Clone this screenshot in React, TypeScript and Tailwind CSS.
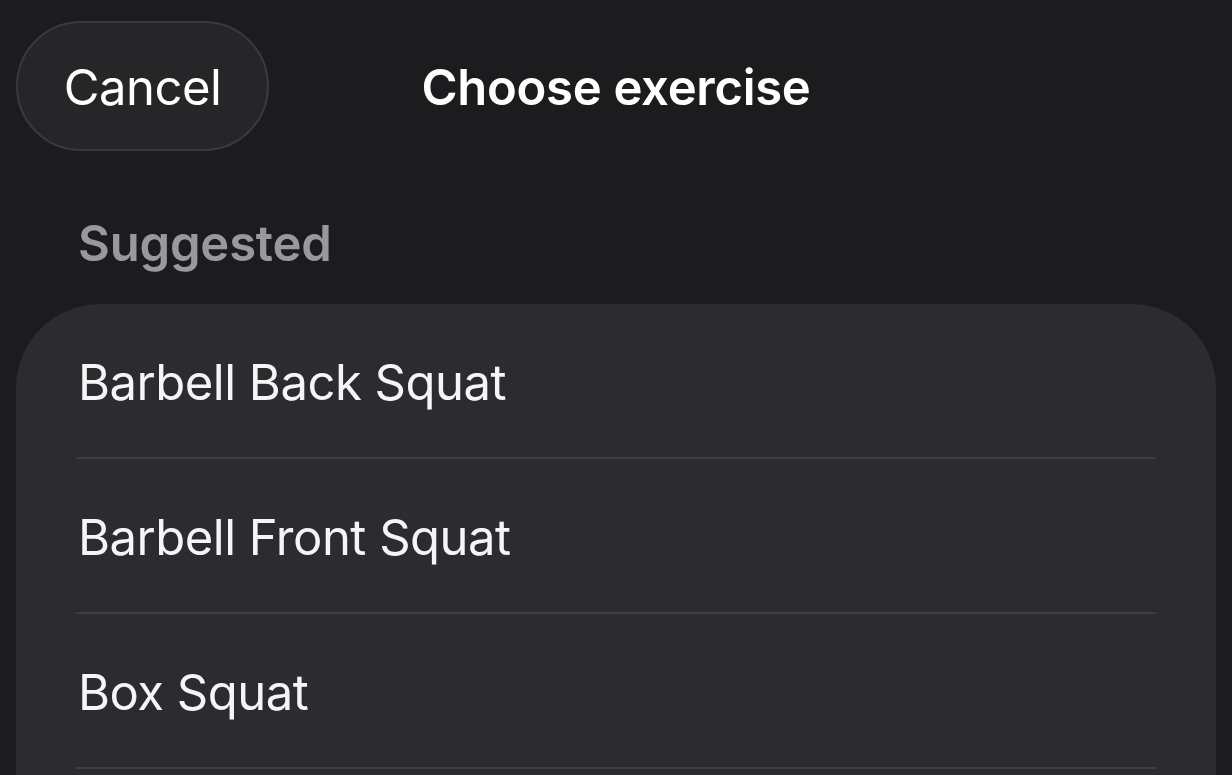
import React from "react";

const items = ["Barbell Back Squat", "Barbell Front Squat", "Box Squat"];

export default function App() {
  return (
    <div
      className="w-[1232px] h-[775px] overflow-hidden bg-[#1c1c1e] text-white flex flex-col"
      style={{ fontFamily: "Inter, 'Noto Sans', sans-serif" }}
    >
      <div className="grid grid-cols-[1fr_auto_1fr] items-start h-[172px] pt-[21px]">
        <div className="flex pl-[16px]">
          <button className="h-[130px] w-[253px] rounded-full bg-[#262629] border-2 border-[#3a3a3d] text-[49px] text-white flex items-center justify-center pt-[3px] tracking-[-0.5px]">
            Cancel
          </button>
        </div>
        <div className="h-[130px] flex items-center pt-[3px] text-[49px] font-semibold tracking-[-0.3px] text-white">
          Choose exercise
        </div>
        <div />
      </div>
      <div className="pl-[78px] h-[132px] pt-[48px] text-[49px] font-semibold text-[#98989f] tracking-[-0.2px] leading-[48px]">
        Suggested
      </div>
      <div className="mx-[16px] flex-1 rounded-t-[84px] bg-[#2c2c2e]">
        {items.map((name) => (
          <div key={name}>
            <div className="h-[153px] flex items-center pl-[62px] pt-[4px] text-[49px] tracking-[-0.5px] text-[#f5f5f7]">
              {name}
            </div>
            <div className="h-[2px] mx-[60px] bg-[#3e3e42]" />
          </div>
        ))}
      </div>
    </div>
  );
}
